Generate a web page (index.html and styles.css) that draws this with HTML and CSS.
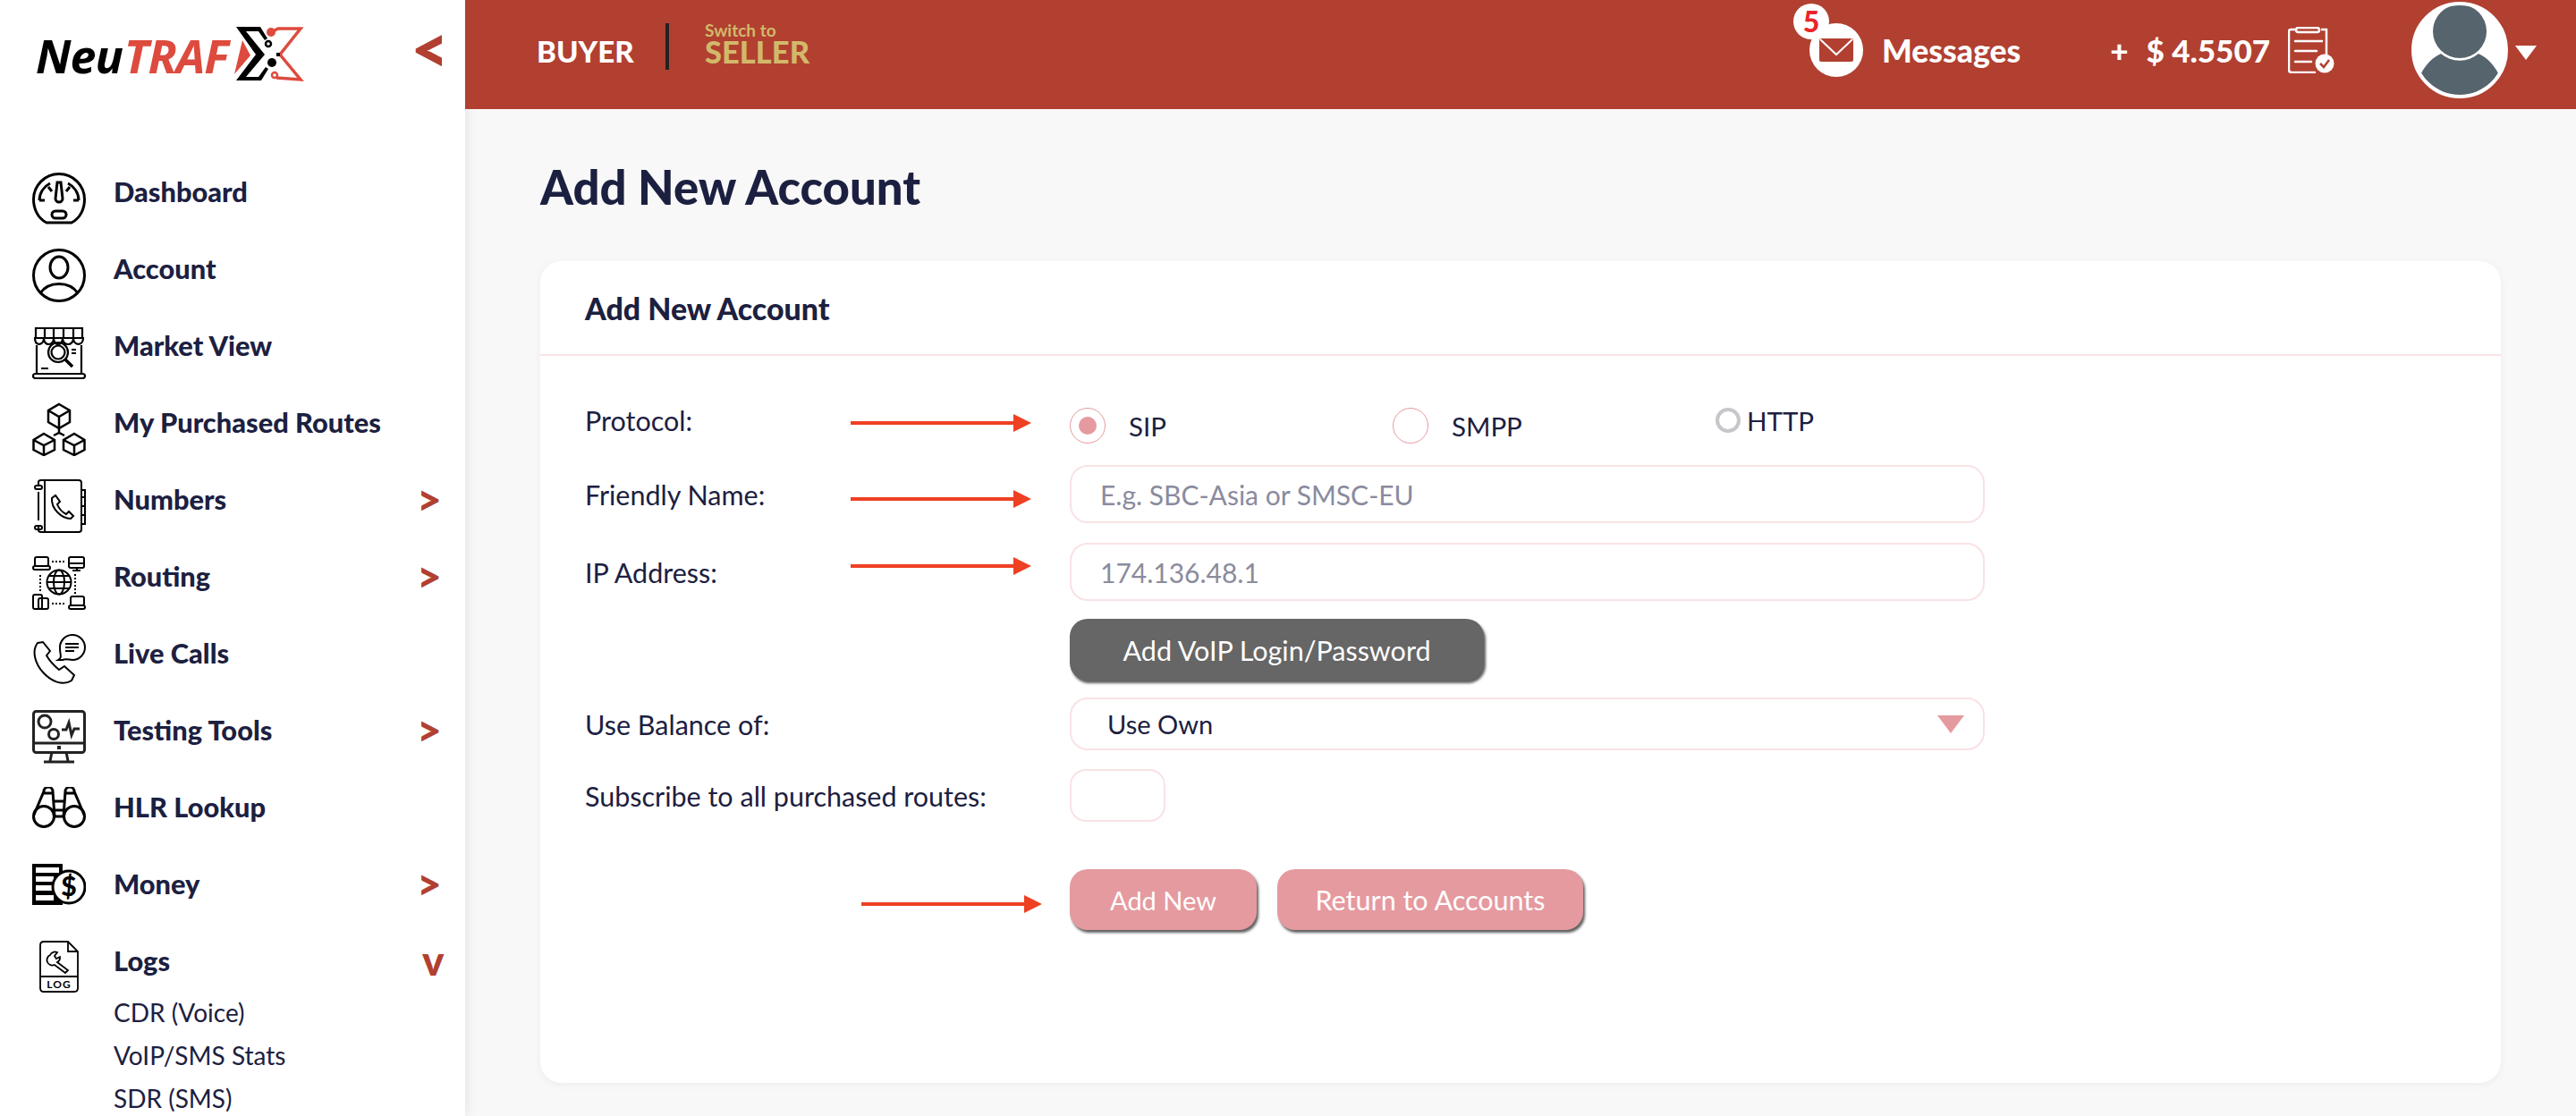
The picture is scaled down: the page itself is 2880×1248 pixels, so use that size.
FILE: index.html
```html
<!DOCTYPE html>
<html lang="en">
<head>
<meta charset="utf-8">
<title>Add New Account</title>
<link rel="stylesheet" href="styles.css">
</head>
<body>
<div class="app">
  <aside class="sidebar">
    <div class="brand">
      <div class="logo">
        <span class="logo-neu">Neu</span><span class="logo-traf">TRAF</span>
        <svg class="logo-x" viewBox="0 0 80 64" width="80" height="64">
          <path d="M11 17 L20 34 L2 55 Z" fill="#dd4b3e"/>
          <path d="M4 2 H31 L39 15 L36 17 L29 7 H15 L36 33 L15 58 H29 L37 47 L40 49 L32 62 H4 L26 33 Z" fill="#000"/>
          <circle cx="40" cy="21" r="3" fill="none" stroke="#000" stroke-width="2.500"/>
          <circle cx="44" cy="42" r="5" fill="#000"/>
          <path d="M43 8 L51 4 H76 L53 33 L76 61 L49 59" fill="none" stroke="#dd4b3e" stroke-width="3.500"/>
          <circle cx="43" cy="8" r="5" fill="#dd4b3e"/>
          <circle cx="47" cy="56" r="3" fill="none" stroke="#dd4b3e" stroke-width="2.500"/>
          <rect x="49" y="31" width="4" height="4" fill="#000"/>
        </svg>
      </div>
      <span class="collapse">&lt;</span>
    </div>
    <nav class="nav">
      <a class="nav-item"><svg class="ico" viewBox="0 0 60 60"><g fill="none" stroke="#000" stroke-width="3"><path d="M16 57 C6 52 1.500 41 1.500 31 A28.500 28.500 0 0 1 58.500 31 C58.500 41 54 52 44 57 Z"/><path d="M8 32 H14 M46 32 H52 M8 32 A22 22 0 0 1 20 13 M40 13 A22 22 0 0 1 52 32 M18 17 L22 22 M42 17 L38 22"/><path d="M28 12 H32 L34 30 A4 4 0 0 1 26 30 Z"/><rect x="22" y="44" width="16" height="8" rx="4"/></g></svg><span>Dashboard</span></a>
      <a class="nav-item"><svg class="ico" viewBox="0 0 60 60"><g fill="none" stroke="#000" stroke-width="3"><circle cx="30" cy="30" r="28.500"/><ellipse cx="30" cy="21" rx="10" ry="12"/><path d="M9 50 C18 36 42 36 51 50"/></g></svg><span>Account</span></a>
      <a class="nav-item"><svg class="ico" viewBox="0 0 60 60"><g fill="none" stroke="#000" stroke-width="2.200"><path d="M4 14 V3 H56 V14 M3 14 H57 C57 23 47 23 46 15 C45 23 35 23 34 15 C33 23 25 23 24 15 C23 23 14 23 13 15 C12 23 3 23 3 14 Z M14 4 V14 M24 4 V14 M35 4 V14 M46 4 V14"/><path d="M5 22 V54 H55 V22"/><rect x="1" y="54" width="58" height="5" rx="2.500"/><circle cx="29" cy="30" r="11"/><circle cx="29" cy="30" r="7.500"/><path d="M37 38 L45 46" stroke-width="3.500"/><path d="M44 27 H49 M44 31 H49 M10 48 H18"/></g></svg><span>Market View</span></a>
      <a class="nav-item"><svg class="ico" viewBox="0 0 60 60"><g fill="none" stroke="#000" stroke-width="2.500"><path d="M30 2 L42 9 V22 L30 29 L18 22 V9 Z M18 9 L30 16 L42 9 M30 16 V29"/><path d="M13 35 L25 42 V53 L13 59 L1.500 53 V42 Z M1.500 42 L13 48 L25 42 M13 48 V59"/><path d="M47 35 L58.500 42 V53 L47 59 L35 53 V42 Z M35 42 L47 48 L58.500 42 M47 48 V59"/><path d="M30 29 V35 M24 37 L30 34 L36 37"/></g></svg><span>My Purchased Routes</span></a>
      <a class="nav-item has-sub"><svg class="ico" viewBox="0 0 60 60"><g fill="none" stroke="#000" stroke-width="2"><path d="M7 8 V3 Q7 1 10 1 H52 Q55 1 55 4 V56 Q55 59 52 59 H10 Q7 59 7 57 V52"/><path d="M7 14 V46 M14 1 V59" /><rect x="3" y="7" width="8" height="4" rx="2"/><rect x="3" y="52" width="8" height="4" rx="2"/><path d="M55 12 H59 V50 H55 M55 20 H59 M55 30 H59 M55 40 H59"/><path d="M22 21 L26 18 L31 25 L28 28 C30 33 34 37 38 39 L41 36 L46 41 L43 44 C33 44 21 33 22 21 Z" stroke-width="2"/></g></svg><span>Numbers</span><b class="chev">&gt;</b></a>
      <a class="nav-item has-sub"><svg class="ico" viewBox="0 0 60 60"><g fill="none" stroke="#000" stroke-width="2"><rect x="3" y="1" width="15" height="10" rx="2"/><rect x="1" y="11" width="19" height="4" rx="2"/><rect x="41" y="1" width="17" height="12" rx="2"/><path d="M41 8 H58 M45 16 H54 M50 13 V16"/><rect x="1" y="43" width="10" height="16" rx="2"/><rect x="7" y="47" width="11" height="12" rx="2"/><rect x="43" y="45" width="15" height="10" rx="2"/><rect x="41" y="55" width="18" height="4" rx="2"/><circle cx="30" cy="29" r="13.500"/><ellipse cx="30" cy="29" rx="6" ry="13.500"/><path d="M16.500 29 H43.500 M18 22 H42 M18 36 H42"/><path d="M22 6 H37 M22 53 H37 M9 21 V40 M48 20 V42" stroke-dasharray="2 2"/></g></svg><span>Routing</span><b class="chev">&gt;</b></a>
      <a class="nav-item"><svg class="ico" viewBox="0 0 60 60"><g fill="none" stroke="#000" stroke-width="2"><path d="M6 11 L12 10 L20 20 L16 25 C20 32 24 36 30 41 L36 37 L47 47 L44 53 C24 66 -8 30 6 11 Z"/><path d="M34 30 L29 30 C34 27 31 25 31 17 A14 14 0 1 1 45 30 C41 30 38 28 34 30 Z"/><path d="M37 12 H52 M37 16 H52 M37 20 H47"/></g></svg><span>Live Calls</span></a>
      <a class="nav-item has-sub"><svg class="ico" viewBox="0 0 60 60"><g fill="none" stroke="#222" stroke-width="3"><rect x="1.500" y="1.500" width="57" height="46" rx="3"/><path d="M2 37 H58"/><path d="M22 47 L20 57 M38 47 L40 57 M13 58 H47" stroke-width="3"/><circle cx="14" cy="13" r="7"/><circle cx="24" cy="27" r="5.500"/><path d="M33 22 H38 L41 14 L44 28 L47 21 H53"/></g><rect x="28" y="40" width="4" height="4" fill="#222"/></svg><span>Testing Tools</span><b class="chev">&gt;</b></a>
      <a class="nav-item"><svg class="ico ico-short" viewBox="0 0 60 46"><g fill="none" stroke="#000" stroke-width="3"><circle cx="13" cy="33" r="11.500"/><circle cx="47" cy="33" r="11.500"/><path d="M2 31 L13 5 A5 5 0 0 1 23 5 L25 33 M58 31 L47 5 A5 5 0 0 0 37 5 L35 33 M13 7 H23 M37 7 H47"/><path d="M24 16 H36 M25 26 H35 M25 33 H35"/></g></svg><span>HLR Lookup</span></a>
      <a class="nav-item has-sub"><svg class="ico ico-short" viewBox="0 0 60 46"><rect x="0" y="0" width="34" height="46" fill="#000"/><g fill="#fff"><rect x="4" y="4" width="26" height="6"/><rect x="4" y="14" width="20" height="6"/><rect x="4" y="24" width="18" height="6"/><rect x="4" y="35" width="20" height="6"/></g><circle cx="41" cy="26" r="18" fill="#fff" stroke="#000" stroke-width="3"/><text class="ico-dollar" x="41" y="36" text-anchor="middle">$</text></svg><span>Money</span><b class="chev">&gt;</b></a>
      <a class="nav-item has-sub open"><svg class="ico ico-log" viewBox="0 0 44 58"><g fill="none" stroke="#000" stroke-width="1.800"><path d="M5 1 H32 L43 12 V53 Q43 57 39 57 H5 Q1 57 1 53 V5 Q1 1 5 1 Z M32 1 V12 H43 M1 40 H43"/><path d="M12 16 A6 6 0 0 1 20 13 L17 17 L19 20 L23 18 A6 6 0 0 1 20 24 L32 33 L29 36 L17 27 A6 6 0 0 1 12 16 Z"/></g><text class="ico-log-text" x="22" y="53" text-anchor="middle">LOG</text></svg><span>Logs</span><b class="chev chev-down">v</b></a>
      <div class="subnav">
        <a>CDR (Voice)</a>
        <a>VoIP/SMS Stats</a>
        <a>SDR (SMS)</a>
      </div>
    </nav>
  </aside>
  <div class="main">
    <header class="topbar">
      <div class="role">
        <span class="role-current">BUYER</span>
        <span class="role-sep"></span>
        <div class="role-switch"><small>Switch to</small><strong>SELLER</strong></div>
      </div>
      <div class="top-right">
        <div class="msg">
          <span class="msg-icon">
            <svg viewBox="0 0 38 26" width="38" height="26"><rect width="38" height="26" rx="2" fill="#b14031"/><path d="M1 1 L19 18 L37 1" fill="none" stroke="#fff" stroke-width="2"/></svg>
            <span class="badge">5</span>
          </span>
          <span class="msg-label">Messages</span>
        </div>
        <div class="balance"><span class="plus">+</span><span>$ 4.5507</span></div>
        <svg class="clip" viewBox="0 0 52 52" width="52" height="52"><g fill="none" stroke="#fff" stroke-width="2.500" stroke-linecap="round"><path d="M8 3 H3 Q1 3 1 5 V48 Q1 51 4 51 H30 M38 3 H43 V32"/><rect x="9" y="1" width="26" height="5" rx="2.500"/><path d="M8 16 H38 M8 27 H32 M8 39 H26"/></g><circle cx="41" cy="41" r="10.500" fill="#fff"/><path d="M36 41 L40 45 L46 37" fill="none" stroke="#b14031" stroke-width="2.500"/></svg>
        <div class="avatar"><svg viewBox="0 0 100 100" width="100" height="100"><circle cx="50" cy="29" r="30" fill="#56646e"/><path d="M7 76 C12 66 20 58 29 54 A32.600 32.600 0 0 0 71 54 C80 58 88 66 93 76 A50 50 0 0 1 7 76 Z" fill="#56646e"/></svg></div>
        <span class="caret"></span>
      </div>
    </header>
    <main class="content">
      <h1 class="page-title">Add New Account</h1>
      <section class="card">
        <h2 class="card-title">Add New Account</h2>
        <form class="form">
          <div class="row row-protocol">
            <label class="lbl">Protocol:</label>
            <div class="radios">
              <span class="radio-opt opt-sip"><i class="radio on"></i>SIP</span>
              <span class="radio-opt opt-smpp"><i class="radio"></i>SMPP</span>
              <span class="radio-opt opt-http"><i class="radio-native"></i>HTTP</span>
            </div>
          </div>
          <div class="row">
            <label class="lbl">Friendly Name:</label>
            <div class="field ph">E.g. SBC-Asia or SMSC-EU</div>
          </div>
          <div class="row row-ip">
            <label class="lbl">IP Address:</label>
            <div class="field ph">174.136.48.1</div>
          </div>
          <div class="row row-voip">
            <span></span>
            <div><button type="button" class="btn btn-grey">Add VoIP Login/Password</button></div>
          </div>
          <div class="row row-balance">
            <label class="lbl">Use Balance of:</label>
            <div class="field select">Use Own<i class="sel-arrow"></i></div>
          </div>
          <div class="row row-sub">
            <label class="lbl">Subscribe to all purchased routes:</label>
            <div class="check"></div>
          </div>
          <div class="row row-actions">
            <span></span>
            <div class="actions">
              <button type="button" class="btn btn-pink btn-add">Add New</button>
              <button type="button" class="btn btn-pink btn-return">Return to Accounts</button>
            </div>
          </div>
        </form>
        <i class="arrow a1"></i>
        <i class="arrow a2"></i>
        <i class="arrow a3"></i>
        <i class="arrow a4"></i>
      </section>
    </main>
  </div>
</div>
</body>
</html>
```

FILE: styles.css
```css
* { box-sizing: border-box; }
html, body { margin: 0; height: 100%; overflow: hidden; }
body { font-family: "Lato", "Noto Sans", sans-serif; color: #1c2040; background: #f8f8f8; }
.app { display: flex; height: 1248px; }

/* sidebar */
.sidebar { width: 520px; flex: none; background: #fff; box-shadow: 0 0 14px rgba(0,0,0,.1); position: relative; z-index: 1; overflow: hidden; }
.brand { height: 192px; display: flex; align-items: flex-start; padding: 28px 0 0 40px; position: relative; }
.logo { display: flex; align-items: flex-start; position: relative; font: italic 700 52px/1 "Noto Sans", sans-serif; letter-spacing: -1px; }
.logo-neu { color: #000; margin-top: 8px; }
.logo-traf { color: #dd4b3e; margin-top: 8px; margin-left: 2px; }
.logo-x { margin-left: 5px; flex: none; }
.collapse { position: absolute; left: 459px; top: 17px; width: 35px; overflow: hidden; color: #b14031; font: 900 78px/72px "Lato", sans-serif; }

.nav { display: flex; flex-direction: column; }
.nav-item { height: 86px; display: flex; align-items: flex-start; padding-left: 36px; font-size: 30.800px; font-weight: 900; line-height: 45px; color: #1c2040; position: relative; }
.nav-item span { margin-left: 31px; }
.ico { width: 60px; height: 60px; flex: none; display: block; }
.ico-short { height: 46px; margin-top: 0; }
.ico-log { width: 44px; height: 58px; margin-left: 8px; margin-right: 8px; }
.ico-dollar { font: 900 30px "Lato", sans-serif; fill: #000; }
.ico-log-text { font: 700 12px "Lato", sans-serif; fill: #000; letter-spacing: 1px; }
.chev { position: absolute; left: 466px; top: 0; color: #b14031; font: 900 48px/44px "Lato", sans-serif; }
.chev-down { left: 472px; top: 0; font-size: 46px; }
.subnav { display: flex; flex-direction: column; margin-top: -30px; padding-left: 127px; font-size: 28px; font-weight: 400; line-height: 48px; color: #1c2040; }

/* header */
.main { flex: 1; min-width: 0; display: flex; flex-direction: column; }
.topbar { height: 122px; flex: none; background: #b14031; display: flex; align-items: center; justify-content: space-between; padding: 0 44px 0 80px; position: relative; z-index: 2; color: #fff; }
.role { display: flex; align-items: center; height: 52px; margin-top: -18px; }
.role-current { font-weight: 900; font-size: 33px; line-height: 1; margin-top: 10px; width: 144px; }
.role-sep { width: 4px; height: 52px; background: #222; }
.role-switch { margin-left: 40px; margin-top: -8px; color: #d2b96a; display: flex; flex-direction: column; font-weight: 900; line-height: 1; }
.role-switch small { font-size: 19px; font-weight: 700; line-height: 20px; }
.role-switch strong { font-size: 34.500px; line-height: 28px; font-weight: 900; }
.top-right { display: flex; align-items: center; height: 122px; }
.msg { display: flex; align-items: center; margin-top: -10px; }
.msg-icon { width: 60px; height: 60px; border-radius: 50%; background: #fff; display: flex; align-items: center; justify-content: center; position: relative; }
.badge { position: absolute; left: -18px; top: -22px; width: 40px; height: 40px; border-radius: 50%; background: #fff; color: #e8262a; font: 900 32px/40px "Lato", sans-serif; text-align: center; }
.msg-label { margin-left: 21px; font-weight: 900; font-size: 35.500px; }
.balance { display: flex; align-items: center; margin-left: 100px; font-weight: 900; font-size: 35px; margin-top: -10px; white-space: pre; }
.plus { margin-right: 20px; }
.clip { margin-left: 20px; margin-top: -10px; }
.avatar { width: 108px; height: 108px; border-radius: 50%; border: 4px solid #fff; margin-left: 86px; margin-top: -10px; overflow: hidden; background: #fff; flex: none; }
.avatar svg { display: block; }
.caret { width: 0; height: 0; border-left: 12px solid transparent; border-right: 12px solid transparent; border-top: 16px solid #fff; margin-left: 8px; margin-top: -4px; }

/* content */
.content { flex: 1; padding: 0 84px 0 84px; min-height: 0; }
.page-title { margin: 61px 0 0; font-size: 52.700px; font-weight: 900; line-height: 52px; color: #1c2040; }
.card { margin-top: 57px; height: 919px; background: #fff; border-radius: 24px; box-shadow: 0 2px 10px rgba(0,0,0,.05); position: relative; }
.card-title { margin: 0; height: 106px; border-bottom: 2px solid #f9e2e4; padding: 0 50px; font-size: 33.900px; font-weight: 900; line-height: 106px; color: #1c2040; }
.form { padding: 0 50px; }
.row { display: grid; grid-template-columns: 542px 1fr; align-items: center; }
.lbl { font-size: 30.500px; line-height: 40px; }
.row-protocol { height: 122px; }
.row-protocol .lbl { margin-top: 22px; }
.radios { display: flex; height: 40px; margin-top: 34px; font-size: 29.500px; position: relative; }
.radio-opt { display: flex; align-items: center; }
.radio { width: 40px; height: 40px; border: 1px solid #e59a9f; border-radius: 50%; display: flex; align-items: center; justify-content: center; margin-right: 26px; }
.radio.on::after { content: ""; width: 20px; height: 20px; border-radius: 50%; background: #e59a9f; }
.opt-sip { width: 361px; }
.opt-smpp { width: 361px; }
.opt-http { margin-top: -12px; }
.radio-native { width: 28px; height: 28px; border: 4px solid #c6c7cb; border-radius: 50%; margin-right: 7px; }
.field { width: 1023px; height: 65px; border: 2px solid #f9e2e4; border-radius: 20px; display: flex; align-items: center; padding-left: 32px; font-size: 30px; position: relative; }
.ph { color: #8a8b9e; }
.row-ip { margin-top: 22px; }
.row-voip { margin-top: 20px; }
.row-balance { margin-top: 19px; }
.row-sub { margin-top: 21px; }
.row-actions { margin-top: 53px; }
.select { height: 59px; padding-left: 40px; font-size: 29px; color: #1c2040; }
.sel-arrow { position: absolute; left: 968px; top: 18px; width: 0; height: 0; border-left: 15px solid transparent; border-right: 15px solid transparent; border-top: 20px solid #e59a9f; }
.check { width: 107px; height: 59px; border: 2px solid #f9e2e4; border-radius: 18px; }
.btn { border: 0; font-family: inherit; font-size: 30.500px; color: #fff; height: 69px; border-radius: 20px; box-shadow: 2px 3px 3px rgba(40,40,40,.75); padding: 0; display: block; }
.btn-grey { width: 463px; background: #666; }
.btn-pink { background: #e59a9f; height: 68px; }
.btn-add { width: 209px; font-size: 29px; }
.btn-return { width: 342px; }
.actions { display: flex; gap: 23px; }

/* annotation arrows */
.arrow { position: absolute; height: 20px; background: linear-gradient(#ee4023,#ee4023) 0 8px / calc(100% - 18px) 4px no-repeat; }
.arrow::after { content: ""; position: absolute; right: 0; top: 0; border-left: 20px solid #ee4023; border-top: 10px solid transparent; border-bottom: 10px solid transparent; }
.a1 { left: 347px; top: 171px; width: 202px; }
.a2 { left: 347px; top: 256px; width: 202px; }
.a3 { left: 347px; top: 331px; width: 202px; }
.a4 { left: 359px; top: 709px; width: 202px; }
```
